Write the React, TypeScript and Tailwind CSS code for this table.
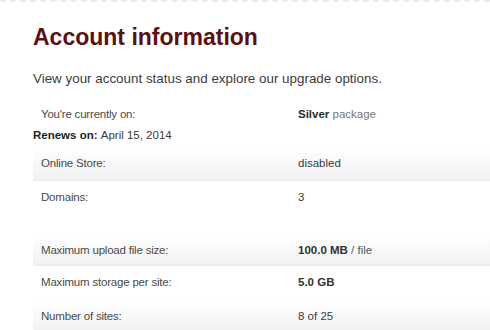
import React from "react";

type Row = { label: string; value: React.ReactNode; shaded: boolean; h: string };

const topRows: Row[] = [
  { label: "Online Store:", value: "disabled", shaded: true, h: "h-[34px]" },
  { label: "Domains:", value: "3", shaded: false, h: "h-[34px]" },
];

const bottomRows: Row[] = [
  {
    label: "Maximum upload file size:",
    value: (
      <>
        <span className="font-bold text-[#333]">100.0 MB</span>
        <span className="text-[#555]"> / file</span>
      </>
    ),
    shaded: true,
    h: "h-[30px]",
  },
  {
    label: "Maximum storage per site:",
    value: <span className="font-bold text-[#333]">5.0 GB</span>,
    shaded: false,
    h: "h-[34px]",
  },
  { label: "Number of sites:", value: "8 of 25", shaded: true, h: "h-[34px]" },
];

function InfoRow({ row }: { row: Row }) {
  return (
    <div
      className={
        row.shaded
          ? `flex ${row.h} items-center bg-gradient-to-b from-white to-[#f1f1f1] border-b border-[#ebebeb]`
          : `flex ${row.h} items-center bg-white`
      }
    >
      <div className="w-[265px] pl-[8px] text-[11.5px] tracking-[-0.2px] text-[#4a4a4a]">{row.label}</div>
      <div className="text-[11.5px] text-[#3a3a3a]">{row.value}</div>
    </div>
  );
}

export default function App() {
  return (
    <div className="w-[490px] h-[330px] overflow-hidden bg-white font-['Liberation_Sans',Arial,sans-serif]">
      <div className="border-t-2 border-dashed border-[#ececec]" />
      <div className="pl-[33px]">
        <h1 className="mt-[21px] text-[23px] leading-[28px] font-bold text-[#5a1010]">
          Account information
        </h1>
        <p className="mt-[20px] text-[13.4px] leading-[16px] text-[#3c3c3c]">
          View your account status and explore our upgrade options.
        </p>
        <div className="mt-[16px] flex h-[24px] items-center">
          <div className="w-[265px] pl-[8px] text-[11.5px] tracking-[-0.2px] text-[#4a4a4a]">
            You're currently on:
          </div>
          <div className="text-[11.5px]">
            <span className="font-bold text-[#2a2a2a]">Silver</span>
            <span className="text-[#777]"> package</span>
          </div>
        </div>
        <div className="flex h-[18px] items-center text-[11.5px] text-[#3a3a3a]">
          <span className="font-bold text-[#222]">Renews on:</span>
          <span>&nbsp;April 15, 2014</span>
        </div>
        <div className="mt-[2px]">
          {topRows.map((r) => (
            <InfoRow key={r.label} row={r} />
          ))}
        </div>
        <div className="mt-[21px]">
          {bottomRows.map((r) => (
            <InfoRow key={r.label} row={r} />
          ))}
        </div>
      </div>
    </div>
  );
}
